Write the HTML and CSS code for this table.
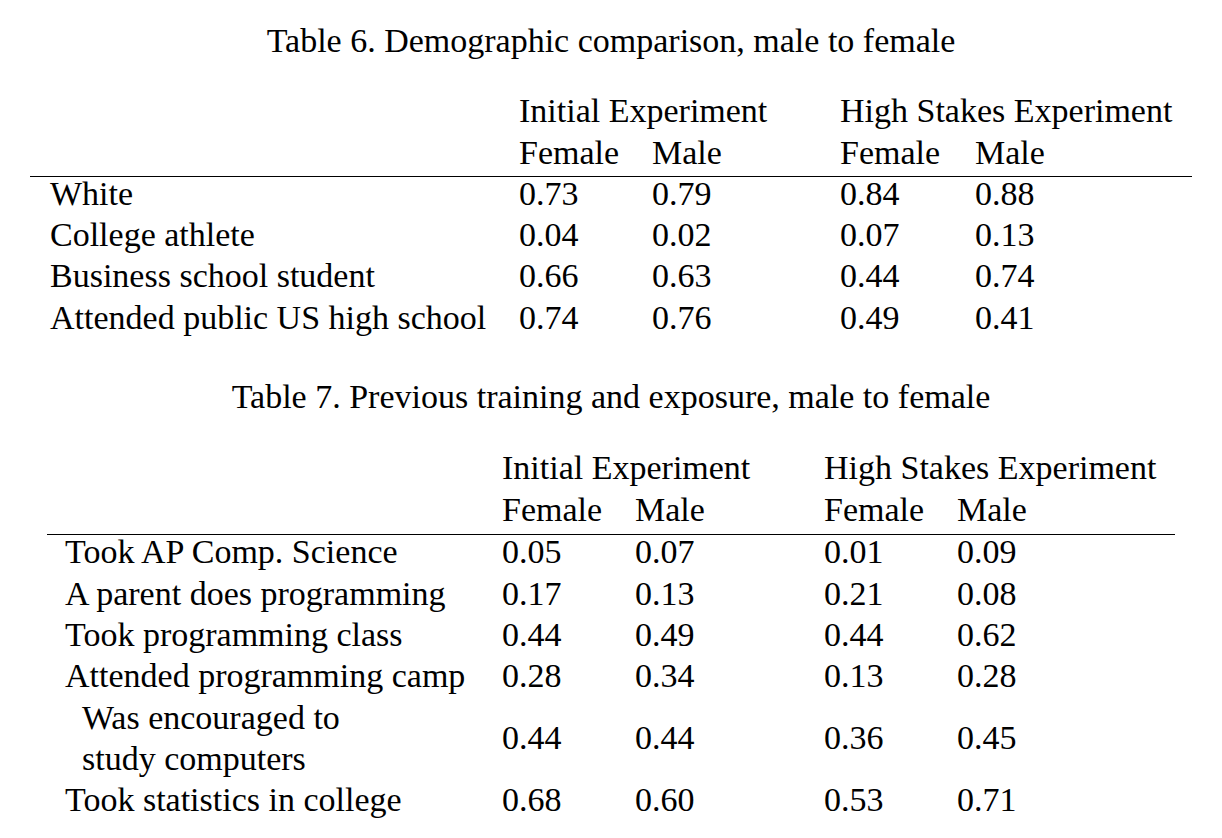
FILE: index.html
```html
<!DOCTYPE html>
<html lang="en">
<head>
<meta charset="utf-8">
<title>Demographic comparison tables</title>
<link rel="stylesheet" href="styles.css">
</head>
<body>
<main class="page">
  <section class="tbl tbl6">
    <h2 class="caption">Table 6. Demographic comparison, male to female</h2>
    <div class="grid head">
      <div class="grp grp-a">Initial Experiment</div>
      <div class="grp grp-b">High Stakes Experiment</div>
      <div class="col-2">Female</div>
      <div>Male</div>
      <div>Female</div>
      <div>Male</div>
    </div>
    <div class="grid body">
      <div class="lbl">White</div><div>0.73</div><div>0.79</div><div>0.84</div><div>0.88</div>
      <div class="lbl">College athlete</div><div>0.04</div><div>0.02</div><div>0.07</div><div>0.13</div>
      <div class="lbl">Business school student</div><div>0.66</div><div>0.63</div><div>0.44</div><div>0.74</div>
      <div class="lbl">Attended public US high school</div><div>0.74</div><div>0.76</div><div>0.49</div><div>0.41</div>
    </div>
  </section>

  <section class="tbl tbl7">
    <h2 class="caption">Table 7. Previous training and exposure, male to female</h2>
    <div class="grid head">
      <div class="grp grp-a">Initial Experiment</div>
      <div class="grp grp-b">High Stakes Experiment</div>
      <div class="col-2">Female</div>
      <div>Male</div>
      <div>Female</div>
      <div>Male</div>
    </div>
    <div class="grid body">
      <div class="lbl">Took AP Comp. Science</div><div>0.05</div><div>0.07</div><div>0.01</div><div>0.09</div>
      <div class="lbl">A parent does programming</div><div>0.17</div><div>0.13</div><div>0.21</div><div>0.08</div>
      <div class="lbl">Took programming class</div><div>0.44</div><div>0.49</div><div>0.44</div><div>0.62</div>
      <div class="lbl">Attended programming camp</div><div>0.28</div><div>0.34</div><div>0.13</div><div>0.28</div>
      <div class="lbl lbl-indent">Was encouraged to<br>study computers</div><div>0.44</div><div>0.44</div><div>0.36</div><div>0.45</div>
      <div class="lbl">Took statistics in college</div><div>0.68</div><div>0.60</div><div>0.53</div><div>0.71</div>
    </div>
  </section>
</main>
</body>
</html>
```

FILE: styles.css
```css
html, body {
  margin: 0;
  padding: 0;
  background: #ffffff;
}

body {
  font-family: "Liberation Serif", "Times New Roman", serif;
  font-size: 34px;
  line-height: 41.3px;
  color: #000000;
  width: 1222px;
}

.page {
  padding-top: 19.9px;
}

.caption {
  margin: 0;
  font-size: inherit;
  font-weight: normal;
  text-align: center;
  white-space: nowrap;
}

.grid {
  display: grid;
  align-items: center;
  white-space: nowrap;
}

.grp-a {
  grid-column: 2 / 4;
}

.grp-b {
  grid-column: 4 / 6;
}

.col-2 {
  grid-column: 2;
}

.head {
  border-bottom: 1.5px solid #000000;
}

/* Table 6 */
.tbl6 {
  margin-left: 30px;
  width: 1162px;
}

.tbl6 .caption {
  margin-left: -30px;
  width: 1222px;
  margin-bottom: 29.2px;
}

.tbl6 .grid {
  grid-template-columns: 489px 133px 188px 135px 1fr;
}

.tbl6 .head {
  padding-bottom: 3.5px;
}

.tbl6 .body {
  margin-top: -4.6px;
}

.tbl6 .lbl {
  padding-left: 20px;
}

/* Table 7 */
.tbl7 {
  margin-top: 37.8px;
  margin-left: 47px;
  width: 1128px;
}

.tbl7 .caption {
  margin-left: -47px;
  width: 1222px;
  margin-bottom: 30.2px;
}

.tbl7 .grid {
  grid-template-columns: 455px 133px 189px 133px 1fr;
}

.tbl7 .head {
  padding-bottom: 4px;
}

.tbl7 .body {
  margin-top: -3.6px;
}

.tbl7 .lbl {
  padding-left: 18px;
}

.tbl7 .lbl-indent {
  padding-left: 35px;
}
```
